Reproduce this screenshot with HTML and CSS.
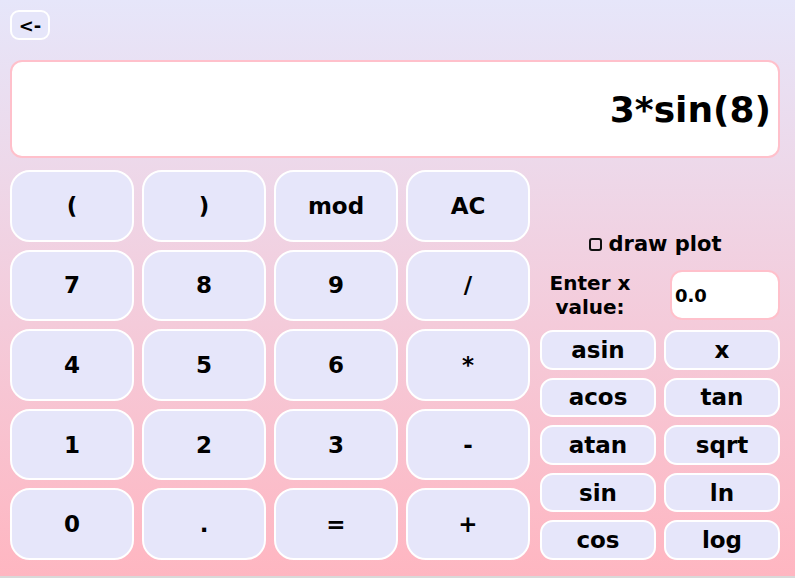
FILE: index.html
```html
<!DOCTYPE html>
<html>
<head>
<meta charset="utf-8">
<link rel="stylesheet" href="styles.css">
</head>
<body>
<div class="app">
  <div class="header"><button class="back">&lt;-</button></div>
  <div class="display">3*sin(8)</div>
  <div class="main">
    <div class="keypad">
      <button class="key">(</button>
      <button class="key">)</button>
      <button class="key">mod</button>
      <button class="key">AC</button>
      <button class="key">7</button>
      <button class="key">8</button>
      <button class="key">9</button>
      <button class="key">/</button>
      <button class="key">4</button>
      <button class="key">5</button>
      <button class="key">6</button>
      <button class="key">*</button>
      <button class="key">1</button>
      <button class="key">2</button>
      <button class="key">3</button>
      <button class="key">-</button>
      <button class="key">0</button>
      <button class="key">.</button>
      <button class="key">=</button>
      <button class="key">+</button>
    </div>
    <div class="side">
      <label class="plot"><input type="checkbox" class="check"><span>draw plot</span></label>
      <div class="xrow">
        <span class="xlabel">Enter x value:</span>
        <input class="xinput" type="text" value="0.0">
      </div>
      <div class="funcs">
        <button class="fn">asin</button>
        <button class="fn">x</button>
        <button class="fn">acos</button>
        <button class="fn">tan</button>
        <button class="fn">atan</button>
        <button class="fn">sqrt</button>
        <button class="fn">sin</button>
        <button class="fn">ln</button>
        <button class="fn">cos</button>
        <button class="fn">log</button>
      </div>
    </div>
  </div>
</div>
</body>
</html>
```
FILE: styles.css
```css
html {
  background: #d9d9d9;
}
body {
  margin: 0;
  height: 576px;
  background: linear-gradient(to bottom, #e6e6fa 0%, #ffb6c1 100%);
  font-family: "DejaVu Sans", sans-serif;
  font-weight: bold;
  color: #000;
}
.app {
  padding: 10px 0 0 10px;
  width: 770px;
  display: flex;
  flex-direction: column;
}
.header {
  display: flex;
  height: 30px;
  margin-bottom: 20px;
}
button {
  font-family: "DejaVu Sans", sans-serif;
  font-weight: bold;
  color: #000;
  padding: 0;
  margin: 0;
  cursor: pointer;
}
.back {
  width: 40px;
  height: 30px;
  border: 2px solid #fff;
  border-radius: 9px;
  background: #e6e6fa;
  font-size: 18px;
}
.display {
  box-sizing: border-box;
  height: 98px;
  border: 2px solid #ffc0cb;
  border-radius: 12px;
  background: #fff;
  font-size: 36px;
  display: flex;
  align-items: center;
  justify-content: flex-end;
  padding-right: 7px;
  margin-bottom: 12px;
}
.main {
  display: grid;
  grid-template-columns: 520px 240px;
  column-gap: 10px;
  height: 390px;
}
.keypad {
  display: grid;
  grid-template-columns: repeat(4, 1fr);
  grid-template-rows: repeat(5, 1fr);
  gap: 8px;
}
.key {
  border: 2px solid #fff;
  border-radius: 20px;
  background: #e6e6fa;
  font-size: 23px;
}
.side {
  display: flex;
  flex-direction: column;
  justify-content: flex-end;
}
.plot {
  display: flex;
  align-items: center;
  justify-content: center;
  height: 24px;
  font-size: 21px;
  margin-bottom: 14px;
  padding-right: 10px;
}
.check {
  appearance: none;
  -webkit-appearance: none;
  box-sizing: border-box;
  width: 13px;
  height: 13px;
  margin: 0 7px 0 0;
  border: 2px solid #111;
  border-radius: 3px;
  background: transparent;
}
.xrow {
  display: flex;
  justify-content: space-between;
  align-items: center;
  height: 50px;
  margin-bottom: 10px;
}
.xlabel {
  width: 100px;
  text-align: center;
  font-size: 20px;
  line-height: 24px;
}
.xinput {
  box-sizing: border-box;
  width: 110px;
  height: 50px;
  border: 2px solid #ffc0cb;
  border-radius: 12px;
  background: #fff;
  font-family: "DejaVu Sans", sans-serif;
  font-weight: bold;
  font-size: 18px;
  padding: 0 0 0 3px;
  margin: 0;
  outline: none;
  color: #000;
}
.funcs {
  display: grid;
  grid-template-columns: 1fr 1fr;
  grid-template-rows: repeat(5, 1fr);
  gap: 8px;
  height: 230px;
}
.fn {
  border: 2px solid #fff;
  border-radius: 13px;
  background: #e6e6fa;
  font-size: 23px;
}
```
